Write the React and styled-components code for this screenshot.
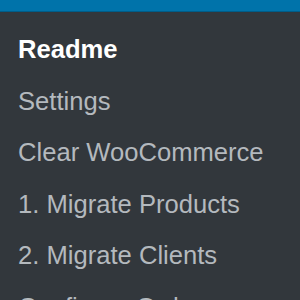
import React from 'react';
import styled, { createGlobalStyle } from 'styled-components';

const GlobalStyle = createGlobalStyle`
  html, body {
    margin: 0;
    padding: 0;
    background: #32373c;
  }
`;

const MENU_ITEMS = [
  { label: 'Readme', current: true },
  { label: 'Settings' },
  { label: 'Clear WooCommerce' },
  { label: '1. Migrate Products' },
  { label: '2. Migrate Clients' },
  { label: 'Configure Orders' },
];

const Page = styled.div`
  width: 300px;
  height: 300px;
  overflow: hidden;
  background: #32373c;
  font-family: 'Liberation Sans', Arial, sans-serif;
`;

const TopBar = styled.div`
  height: 11px;
  background: #0073aa;
  border-bottom: 1px solid #005d89;
`;

const SubMenu = styled.ul`
  list-style: none;
  margin: 0;
  padding: 12.4px 0 0 18px;
`;

const MenuItem = styled.li`
  font-size: 25.6px;
  line-height: 51.5px;
  white-space: nowrap;
  color: ${(props) => (props.current ? '#ffffff' : '#b4b9be')};
  font-weight: ${(props) => (props.current ? 700 : 400)};
`;

export default function App() {
  return (
    <Page>
      <GlobalStyle />
      <TopBar />
      <SubMenu>
        {MENU_ITEMS.map((item) => (
          <MenuItem key={item.label} current={item.current}>
            {item.label}
          </MenuItem>
        ))}
      </SubMenu>
    </Page>
  );
}
